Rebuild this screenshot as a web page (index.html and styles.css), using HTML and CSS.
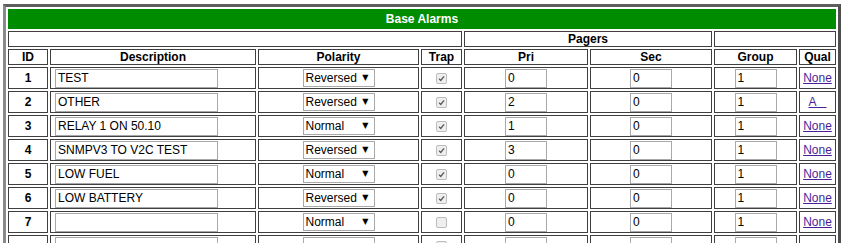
FILE: index.html
```html
<!DOCTYPE html>
<html lang="en">
<head>
    <meta charset="UTF-8">
    <title>Base Alarms</title>
    <link rel="stylesheet" href="styles.css">
</head>
<body>
    <table class="alarms">
        <colgroup>
            <col class="c-id"><col class="c-desc"><col class="c-pol"><col class="c-trap">
            <col class="c-pri"><col class="c-sec"><col class="c-group"><col class="c-qual">
        </colgroup>
        <tr class="title-row">
            <th colspan="8">Base Alarms</th>
        </tr>
        <tr class="head-row">
            <th colspan="4"></th>
            <th colspan="2">Pagers</th>
            <th colspan="2"></th>
        </tr>
        <tr class="head-row">
            <th>ID</th>
            <th>Description</th>
            <th>Polarity</th>
            <th>Trap</th>
            <th>Pri</th>
            <th>Sec</th>
            <th>Group</th>
            <th>Qual</th>
        </tr>

        <tr>
            <td class="id">1</td>
            <td class="desc"><input class="txt wide" type="text" value="TEST"></td>
            <td><span class="sel"><select><option>Reversed</option><option>Normal</option></select><span class="arrow">▼</span></span></td>
            <td><span class="chk on"><svg viewBox="0 0 10 10"><path d="M2.3 5.2 L4.2 7.2 L7.8 2.6" /></svg></span></td>
            <td><input class="txt num" type="text" value="0"></td>
            <td><input class="txt num" type="text" value="0"></td>
            <td><input class="txt num" type="text" value="1"></td>
            <td><a href="#">None</a></td>
        </tr>
        <tr>
            <td class="id">2</td>
            <td class="desc"><input class="txt wide" type="text" value="OTHER"></td>
            <td><span class="sel"><select><option>Reversed</option><option>Normal</option></select><span class="arrow">▼</span></span></td>
            <td><span class="chk on"><svg viewBox="0 0 10 10"><path d="M2.3 5.2 L4.2 7.2 L7.8 2.6" /></svg></span></td>
            <td><input class="txt num" type="text" value="2"></td>
            <td><input class="txt num" type="text" value="0"></td>
            <td><input class="txt num" type="text" value="1"></td>
            <td><a href="#">A&nbsp;&nbsp;&nbsp;</a></td>
        </tr>
        <tr>
            <td class="id">3</td>
            <td class="desc"><input class="txt wide" type="text" value="RELAY 1 ON 50.10"></td>
            <td><span class="sel"><select><option>Normal</option><option>Reversed</option></select><span class="arrow">▼</span></span></td>
            <td><span class="chk on"><svg viewBox="0 0 10 10"><path d="M2.3 5.2 L4.2 7.2 L7.8 2.6" /></svg></span></td>
            <td><input class="txt num" type="text" value="1"></td>
            <td><input class="txt num" type="text" value="0"></td>
            <td><input class="txt num" type="text" value="1"></td>
            <td><a href="#">None</a></td>
        </tr>
        <tr>
            <td class="id">4</td>
            <td class="desc"><input class="txt wide" type="text" value="SNMPV3 TO V2C TEST"></td>
            <td><span class="sel"><select><option>Reversed</option><option>Normal</option></select><span class="arrow">▼</span></span></td>
            <td><span class="chk on"><svg viewBox="0 0 10 10"><path d="M2.3 5.2 L4.2 7.2 L7.8 2.6" /></svg></span></td>
            <td><input class="txt num" type="text" value="3"></td>
            <td><input class="txt num" type="text" value="0"></td>
            <td><input class="txt num" type="text" value="1"></td>
            <td><a href="#">None</a></td>
        </tr>
        <tr>
            <td class="id">5</td>
            <td class="desc"><input class="txt wide" type="text" value="LOW FUEL"></td>
            <td><span class="sel"><select><option>Normal</option><option>Reversed</option></select><span class="arrow">▼</span></span></td>
            <td><span class="chk on"><svg viewBox="0 0 10 10"><path d="M2.3 5.2 L4.2 7.2 L7.8 2.6" /></svg></span></td>
            <td><input class="txt num" type="text" value="0"></td>
            <td><input class="txt num" type="text" value="0"></td>
            <td><input class="txt num" type="text" value="1"></td>
            <td><a href="#">None</a></td>
        </tr>
        <tr>
            <td class="id">6</td>
            <td class="desc"><input class="txt wide" type="text" value="LOW BATTERY"></td>
            <td><span class="sel"><select><option>Reversed</option><option>Normal</option></select><span class="arrow">▼</span></span></td>
            <td><span class="chk on"><svg viewBox="0 0 10 10"><path d="M2.3 5.2 L4.2 7.2 L7.8 2.6" /></svg></span></td>
            <td><input class="txt num" type="text" value="0"></td>
            <td><input class="txt num" type="text" value="0"></td>
            <td><input class="txt num" type="text" value="1"></td>
            <td><a href="#">None</a></td>
        </tr>
        <tr>
            <td class="id">7</td>
            <td class="desc"><input class="txt wide" type="text" value=""></td>
            <td><span class="sel"><select><option>Normal</option><option>Reversed</option></select><span class="arrow">▼</span></span></td>
            <td><span class="chk"></span></td>
            <td><input class="txt num" type="text" value="0"></td>
            <td><input class="txt num" type="text" value="0"></td>
            <td><input class="txt num" type="text" value="1"></td>
            <td><a href="#">None</a></td>
        </tr>
        <!-- next row only shows its top edge in the frame -->
        <tr>
            <td class="id"></td>
            <td class="desc"><input class="txt wide" type="text" value=""></td>
            <td><span class="sel"><select><option></option></select></span></td>
            <td><span class="chk"></span></td>
            <td><input class="txt num" type="text" value=""></td>
            <td><input class="txt num" type="text" value=""></td>
            <td><input class="txt num" type="text" value=""></td>
            <td></td>
        </tr>
    </table>
</body>
</html>
```

FILE: styles.css
```css
html {
    overflow: hidden;
}

body {
    margin: 0;
    font-family: "Liberation Sans", Arial, sans-serif;
    font-size: 12px;
    color: #000;
    background: #fff;
}

/* Alarms table */
.alarms {
    margin: 4px 0 0 3px;
    border-collapse: separate;
    border-spacing: 2px;
    border: 3px solid #8a8a8a;
    border-top-color: #5e5e5e;
    border-right-color: #4e4e4e;
    border-bottom-color: #4e4e4e;
    table-layout: fixed;
}

.c-id { width: 40px; }
.c-desc { width: 206px; }
.c-pol { width: 161px; }
.c-trap { width: 41px; }
.c-pri { width: 124px; }
.c-sec { width: 122px; }
.c-group { width: 83px; }
.c-qual { width: 37px; }

.alarms th,
.alarms td {
    border: 1px solid #3f3f3f;
    padding: 0;
    text-align: center;
    vertical-align: middle;
}

.alarms th {
    height: 14px;
    line-height: 14px;
    font-weight: bold;
}

.title-row th {
    background: #008c00;
    border-color: #008c00;
    color: #fff;
    height: 18px;
    line-height: 18px;
}

.alarms td {
    height: 20px;
}

.alarms td.id {
    font-weight: bold;
}

.alarms td.desc {
    text-align: left;
    padding-left: 4px;
}

/* Inputs */
.txt {
    box-sizing: border-box;
    height: 19px;
    margin: 0;
    padding: 0 2px;
    border: 1px solid #a9a9a9;
    font-family: "Liberation Sans", Arial, sans-serif;
    font-size: 12px;
    color: #000;
    vertical-align: middle;
}

.txt.wide {
    width: 163px;
}

.txt.num {
    width: 42px;
}

.sel {
    position: relative;
    display: inline-block;
    vertical-align: middle;
}

.sel select {
    appearance: none;
    -webkit-appearance: none;
    box-sizing: border-box;
    width: 72px;
    height: 18px;
    margin: 0;
    padding: 0 0 0 2px;
    border: 1px solid #a9a9a9;
    border-radius: 0;
    background: #fff;
    font-family: "Liberation Sans", Arial, sans-serif;
    font-size: 12px;
    color: #000;
    display: block;
}

.sel .arrow {
    position: absolute;
    right: 6px;
    top: 3px;
    font-family: "DejaVu Sans", sans-serif;
    font-size: 8px;
    line-height: 12px;
    color: #000;
    pointer-events: none;
}

.chk {
    display: inline-block;
    box-sizing: border-box;
    width: 11px;
    height: 11px;
    border: 1px solid #bcbcbc;
    border-radius: 2px;
    background: #efefef;
    vertical-align: middle;
}

.chk svg {
    display: block;
    width: 9px;
    height: 9px;
}

.chk svg path {
    fill: none;
    stroke: #5e5e5e;
    stroke-width: 1.6;
}

.alarms a {
    color: #4b1f9a;
    text-decoration: underline;
}
```
